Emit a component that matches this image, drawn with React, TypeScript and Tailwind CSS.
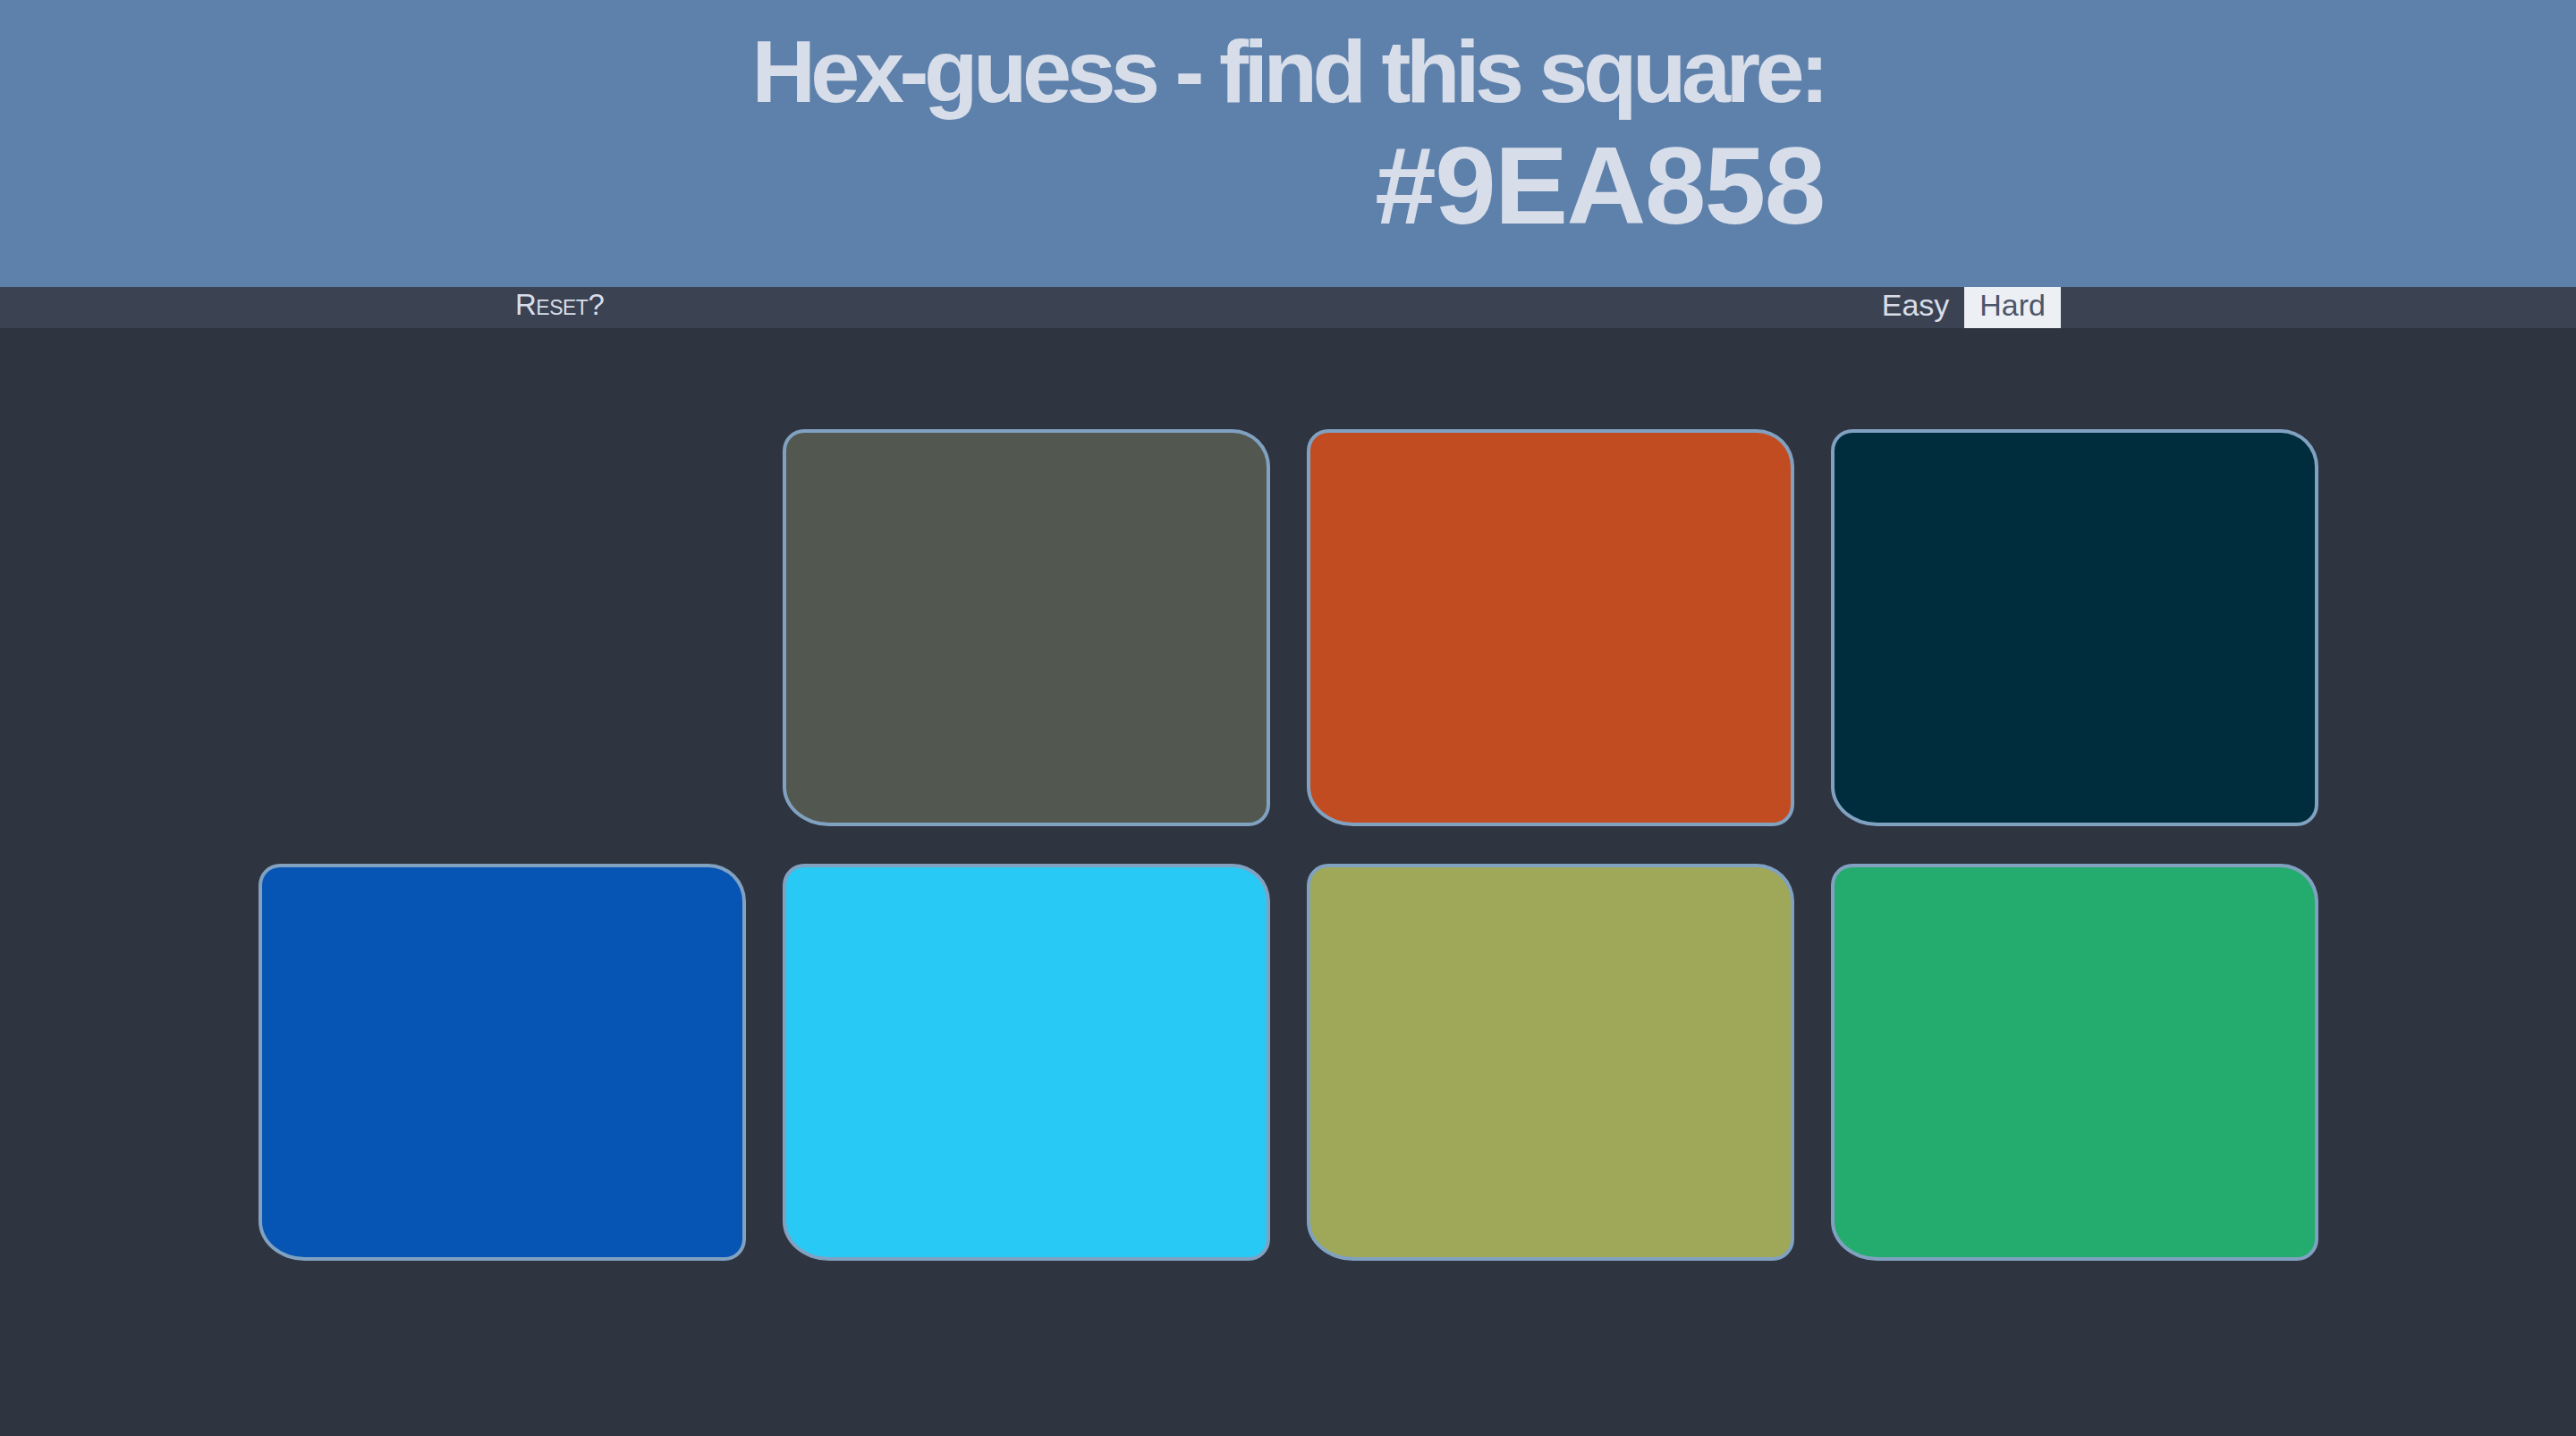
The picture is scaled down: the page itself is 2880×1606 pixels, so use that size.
import React from "react";

const tiles: (string | null)[] = [
  null,
  "#525850",
  "#c24c22",
  "#002d3e",
  "#0655b4",
  "#29c9f5",
  "#9ea858",
  "#24ac6f",
];

export default function App() {
  return (
    <div
      className="min-h-[1606px] w-full bg-[#2e3440]"
      style={{ fontFamily: '"Liberation Sans", Arial, sans-serif' }}
    >
      <header className="h-[321px] bg-[#5e81ac] flex justify-center pt-[30px]">
        <div className="inline-flex flex-col items-end text-[#d8dee9] font-bold">
          <h1 className="text-[99px] leading-[99px] tracking-[-5.5px]">
            Hex-guess - find this square:
          </h1>
          <div className="mt-[17px] text-[123px] leading-[123px] tracking-[-1.5px]">
            #9EA858
          </div>
        </div>
      </header>
      <nav className="h-[46px] bg-[#3b4252] flex justify-center">
        <div className="w-[1728px] flex justify-between items-stretch">
          <button className="text-[33px] leading-[40px] pb-[6px] text-[#d8dee9] [font-variant:small-caps] tracking-[-0.5px] cursor-pointer">
            Reset?
          </button>
          <div className="flex items-stretch">
            <button className="text-[34px] leading-[40px] pb-[6px] text-[#d8dee9] pr-[17px] cursor-pointer">
              Easy
            </button>
            <button className="text-[34px] leading-[40px] pb-[6px] bg-[#eceff4] text-[#4c566a] px-[17px] cursor-pointer">
              Hard
            </button>
          </div>
        </div>
      </nav>
      <main className="pt-[113px] flex justify-center">
        <div className="grid grid-cols-[repeat(4,545px)] gap-x-[41px] gap-y-[42px]">
          {tiles.map((c, i) =>
            c ? (
              <div
                key={i}
                className="h-[444px] border-[4px] border-[#81a1c1] rounded-tl-[24px] rounded-tr-[42px] rounded-br-[24px] rounded-bl-[52px_44px] cursor-pointer"
                style={{ backgroundColor: c }}
              />
            ) : (
              <div key={i} className="h-[444px]" />
            )
          )}
        </div>
      </main>
    </div>
  );
}
